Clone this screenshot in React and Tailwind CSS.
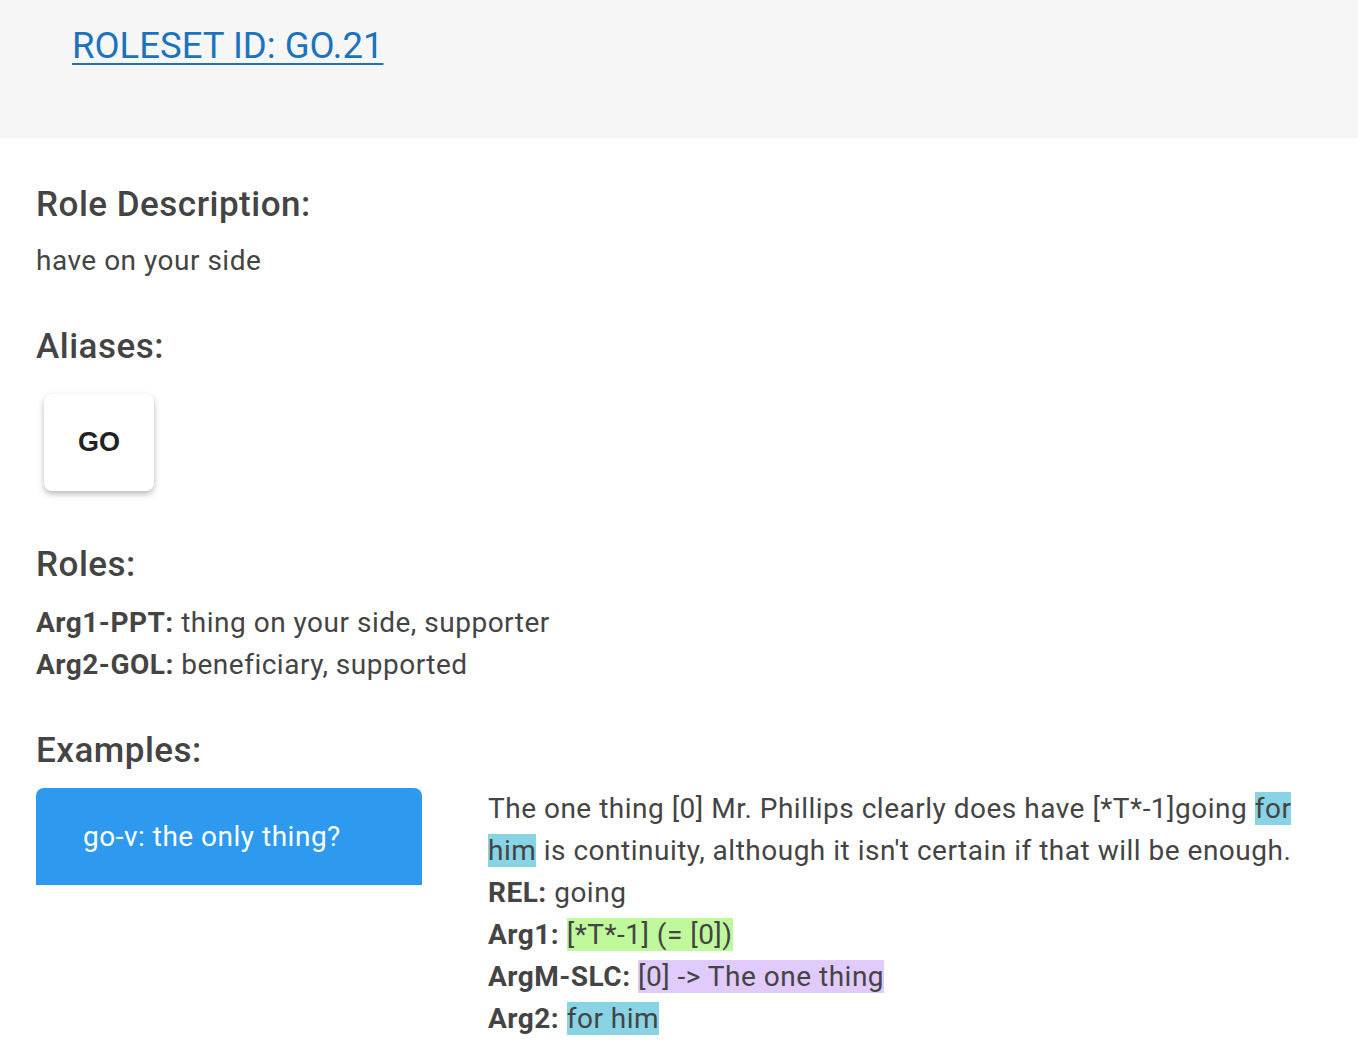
import React from 'react';

const font = { fontFamily: 'Roboto, "Noto Sans", sans-serif' };

const Heading = ({ children, className = '' }) => (
  <h2 className={`text-[35px] leading-[40px] font-medium tracking-[0.5px] text-[#444] ${className}`}>{children}</h2>
);

const Hl = ({ color, children }) => <span className={color}>{children}</span>;

export default function App() {
  return (
    <div className="min-h-screen bg-white text-[#444]" style={font}>
      <div className="h-[138px] bg-[#f6f6f6] pl-[72px] pt-[26px]">
        <a href="#" className="text-[36.5px] leading-[40px] text-[#1b72bd] underline underline-offset-[5px] decoration-2">
          ROLESET ID: GO.21
        </a>
      </div>

      <div className="px-[36px] pt-[47px]">
        <Heading>Role Description:</Heading>
        <p className="mt-[15px] text-[28px] leading-[42px] tracking-[0.5px]">have on your side</p>

        <Heading className="mt-[45px]">Aliases:</Heading>
        <div className="mt-[27px] ml-[8px] flex h-[97px] w-[110px] items-center justify-center rounded-lg bg-white shadow-[0_3px_6px_rgba(0,0,0,0.28)]">
          <span className="text-[27px] font-bold text-[#222]" style={{ fontFamily: '"Liberation Sans", Arial, sans-serif' }}>GO</span>
        </div>

        <Heading className="mt-[54px]">Roles:</Heading>
        <div className="mt-[17px] text-[28px] leading-[42px] tracking-[0.5px]">
          <p><span className="font-bold">Arg1-PPT:</span> thing on your side, supporter</p>
          <p><span className="font-bold">Arg2-GOL:</span> beneficiary, supported</p>
        </div>

        <Heading className="mt-[45px]">Examples:</Heading>
        <div className="mt-[17px] flex gap-[66px]">
          <button className="flex h-[97px] w-[386px] shrink-0 items-center rounded-t-lg bg-[#2d9af0] pl-[47px] text-left text-[28px] tracking-[0.5px] text-white">
            go-v: the only thing?
          </button>
          <div className="flex-1 text-[28px] leading-[42px] tracking-[0.5px]">
            <p>
              The one thing [0] Mr. Phillips clearly does have [*T*-1]going{' '}
              <Hl color="bg-[#88d4e4]">for him</Hl> is continuity, although it isn't certain if that will be enough.
            </p>
            <p><span className="font-bold">REL:</span> going</p>
            <p><span className="font-bold">Arg1:</span> <Hl color="bg-[#c0f89c]">[*T*-1] (= [0])</Hl></p>
            <p><span className="font-bold">ArgM-SLC:</span> <Hl color="bg-[#e1cbfd]">[0] -&gt; The one thing</Hl></p>
            <p><span className="font-bold">Arg2:</span> <Hl color="bg-[#88d4e4]">for him</Hl></p>
          </div>
        </div>
      </div>
    </div>
  );
}
